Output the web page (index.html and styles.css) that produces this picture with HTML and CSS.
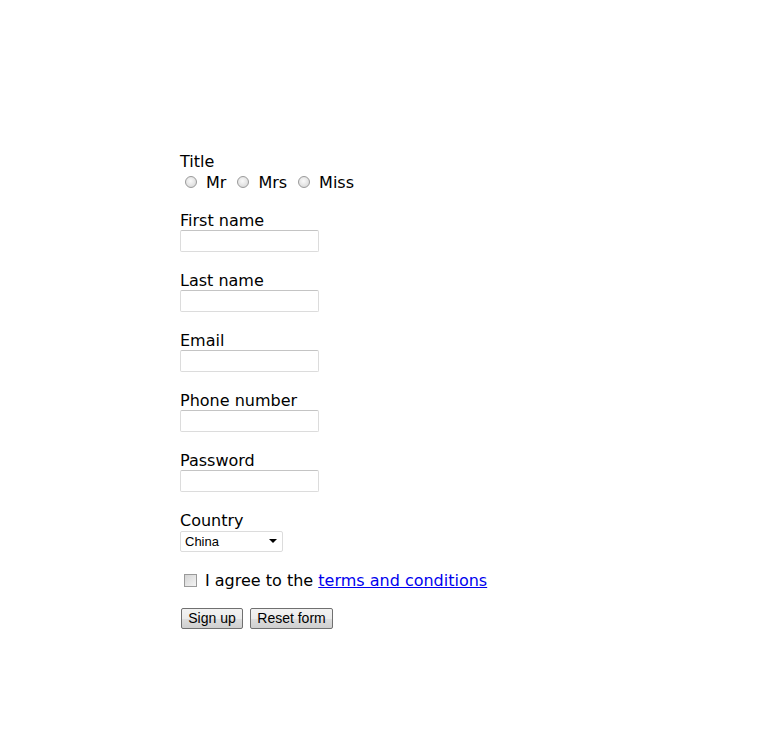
FILE: index.html
```html
<!DOCTYPE html>
<html>
<head>
<meta charset="utf-8">
<title>Sign up</title>
<link rel="stylesheet" href="styles.css">
</head>
<body>
<form class="form">
  <div class="group group-title">
    <div class="label">Title</div>
    <div class="radios">
      <label class="radio"><input type="radio" name="title"><span>Mr</span></label>
      <label class="radio"><input type="radio" name="title"><span>Mrs</span></label>
      <label class="radio"><input type="radio" name="title"><span>Miss</span></label>
    </div>
  </div>
  <div class="group">
    <label class="label">First name</label>
    <input class="text" type="text">
  </div>
  <div class="group">
    <label class="label">Last name</label>
    <input class="text" type="text">
  </div>
  <div class="group">
    <label class="label">Email</label>
    <input class="text" type="text">
  </div>
  <div class="group">
    <label class="label">Phone number</label>
    <input class="text" type="text">
  </div>
  <div class="group">
    <label class="label">Password</label>
    <input class="text" type="password">
  </div>
  <div class="group group-country">
    <label class="label">Country</label>
    <span class="select-wrap"><select class="select"><option>China</option></select></span>
  </div>
  <div class="agree">
    <input class="check" type="checkbox">
    <span>I agree to the <a href="#" class="link">terms and conditions</a></span>
  </div>
  <div class="buttons">
    <button type="button" class="btn btn-sign">Sign up</button>
    <button type="reset" class="btn btn-reset">Reset form</button>
  </div>
</form>
</body>
</html>
```
FILE: styles.css
```css
html, body {
  margin: 0;
  padding: 0;
  background: #fff;
}
body {
  font-family: "DejaVu Sans", Verdana, sans-serif;
  font-size: 16px;
  color: #000;
}
.form {
  padding: 152px 0 0 180px;
  display: flex;
  flex-direction: column;
}
.group {
  display: flex;
  flex-direction: column;
  align-items: flex-start;
  margin-bottom: 19px;
}
.group-title {
  margin-bottom: 19px;
}
.group-title .label {
  margin-bottom: 1px;
}
.label {
  display: block;
  height: 19px;
  line-height: 19px;
  margin: 0;
}
.radios {
  display: flex;
  align-items: center;
  height: 20px;
}
.radio {
  display: flex;
  align-items: center;
  margin-right: 6px;
}
.radio input {
  appearance: none;
  -webkit-appearance: none;
  width: 12px;
  height: 12px;
  margin: 0 9px 0 5px;
  border: 1px solid #9a9a9a;
  border-radius: 50%;
  background: radial-gradient(circle at 45% 40%, #fafafa 0, #e2e2e2 60%, #cfcfcf 100%);
  box-sizing: border-box;
}
.text {
  width: 139px;
  height: 22px;
  box-sizing: border-box;
  border: 1px solid #dcdcdc;
  border-top-color: #c4c4c4;
  border-radius: 2px;
  padding: 0 3px;
  margin: 0;
  background: #fff;
  font: 13px "Liberation Sans", Arial, sans-serif;
}
.group-country {
  margin-bottom: 18px;
}
.group-country .label {
  margin-bottom: 1px;
}
.select-wrap {
  position: relative;
  display: inline-block;
}
.select-wrap::after {
  content: "";
  position: absolute;
  right: 6px;
  top: 8px;
  border-left: 4px solid transparent;
  border-right: 4px solid transparent;
  border-top: 4px solid #000;
  pointer-events: none;
}
.select {
  appearance: none;
  -webkit-appearance: none;
  display: block;
  width: 103px;
  height: 21px;
  box-sizing: border-box;
  border: 1px solid #dcdcdc;
  border-radius: 2px;
  background: #fff;
  padding: 0 0 0 4px;
  margin: 0;
  font: 13px "Liberation Sans", Arial, sans-serif;
  color: #000;
}
.agree {
  display: flex;
  align-items: center;
  height: 20px;
  margin-bottom: 18px;
}
.check {
  appearance: none;
  -webkit-appearance: none;
  width: 13px;
  height: 13px;
  margin: 0 8px 0 4px;
  box-sizing: border-box;
  border: 1px solid #9a9a9a;
  background: linear-gradient(135deg, #d4d4d4, #f4f4f4);
}
.link {
  color: #0000ee;
  text-decoration: underline;
}
.buttons {
  display: flex;
  gap: 7px;
  padding-left: 1px;
}
.btn {
  height: 21px;
  box-sizing: border-box;
  border: 1px solid #707070;
  border-radius: 2px;
  background: linear-gradient(#f2f2f2 0, #ebebeb 50%, #dddddd 51%, #cfcfcf 100%);
  font: 14px "Liberation Sans", Arial, sans-serif;
  color: #000;
  padding: 0;
  margin: 0;
  white-space: nowrap;
  line-height: 19px;
}
.btn-sign { width: 62px; }
.btn-reset { width: 83px; }
```
